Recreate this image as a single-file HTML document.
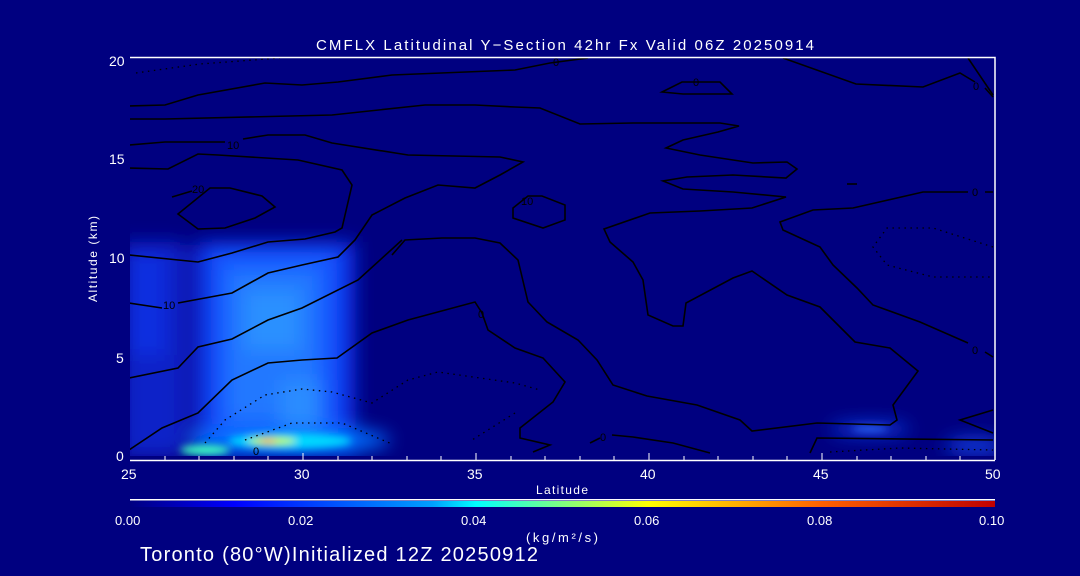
<!DOCTYPE html>
<html><head><meta charset="utf-8"><style>
html,body{margin:0;padding:0;background:#000080;width:1080px;height:576px;overflow:hidden}
svg{display:block}
text{font-family:"Liberation Sans",sans-serif;fill:#fff}
</style></head><body>
<svg width="1080" height="576" viewBox="0 0 1080 576">
<defs>
<filter id="b8" x="-50%" y="-50%" width="200%" height="200%"><feGaussianBlur stdDeviation="9"/></filter>
<filter id="b4" x="-50%" y="-50%" width="200%" height="200%"><feGaussianBlur stdDeviation="4"/></filter>
<linearGradient id="cb" x1="0" x2="1">
<stop offset="0" stop-color="#000080"/><stop offset="0.12" stop-color="#0000ff"/><stop offset="0.35" stop-color="#00a0ff"/><stop offset="0.4" stop-color="#00ffff"/><stop offset="0.6" stop-color="#ffff00"/><stop offset="0.8" stop-color="#ff6000"/><stop offset="1" stop-color="#c00000"/></linearGradient>
<clipPath id="pc"><rect x="130" y="58" width="865" height="398"/></clipPath>
</defs>
<g clip-path="url(#pc)">
<g filter="url(#b8)">
<rect x="122" y="242" width="58" height="215" fill="#0a22c8"/>
<rect x="130" y="255" width="35" height="100" fill="#0e2ee0"/>
<rect x="180" y="245" width="20" height="205" fill="#0818b0"/>
<rect x="200" y="242" width="155" height="215" fill="#0a30e8"/>
<rect x="212" y="250" width="125" height="190" fill="#1658ff"/>
<rect x="228" y="270" width="90" height="150" fill="#2478ff"/>
<rect x="245" y="290" width="55" height="60" fill="#2a90ff"/>
<rect x="280" y="380" width="40" height="55" fill="#2a8cff"/>
<ellipse cx="290" cy="440" rx="100" ry="14" fill="#0070ff"/>
<ellipse cx="870" cy="429" rx="40" ry="5" fill="#1850ff"/>
<ellipse cx="975" cy="446" rx="30" ry="7" fill="#1448f0"/>
</g>
<g filter="url(#b4)">
<ellipse cx="290" cy="441" rx="62" ry="8" fill="#00d8ff"/>
<ellipse cx="205" cy="450" rx="25" ry="5" fill="#40ffc0"/>
<ellipse cx="272" cy="441" rx="24" ry="4" fill="#c0ff40"/>
<ellipse cx="268" cy="441" rx="9" ry="2.5" fill="#ffa000"/>
<ellipse cx="870" cy="429" rx="18" ry="2.5" fill="#3070ff"/>
</g>
<g fill="none" stroke="#000" stroke-width="1.6">
<path d="M129 106 L165 105 L198 95 L265 83 L302 85 L338 82 L392 75 L515 70 L550 63 L588 58"/>
<path d="M129 119 L165 119 L332 115 L425 105 L475 105 L515 107 L540 108 L580 124 L633 123 L720 123 L739 126 L718 132 L683 140 L666 148 L700 155 L753 163 L787 162 L797 169 L786 178 L733 175 L687 177 L663 181 L683 189 L733 192 L786 197 L752 208 L700 211 L650 213 L604 229 L610 242 L633 262 L643 280 L648 315 L673 326 L683 326 L686 303 L733 278 L752 271 L787 295 L820 307 L855 342 L890 348 L918 371 L893 405 L897 420 L890 425 L817 423 L752 431 L740 420 L697 405 L647 396 L613 385 L597 360 L578 340 L547 322 L528 302 L518 260 L500 243 L475 238 L442 238 L405 240 L392 255"/>
<path d="M129 145 L165 142 L225 142 M243 139 L268 135 L305 135 L332 143 L408 155 L500 157 L523 162 L500 175 L475 188 L438 185 L405 198 L372 215 L355 240 L338 257 L302 265 L268 273 L232 293 L178 303 M162 308 L129 303"/>
<path d="M129 168 L168 169 L198 154 L218 155 L298 160 L342 170 L352 185 L342 228 L335 232 L305 239 L268 242 L232 253 L198 262 L129 255"/>
<path d="M172 197 L192 191 M210 188 L230 188 L262 196 L275 207 L255 218 L225 228 L198 229 L178 214 Z"/>
<path d="M129 378 L178 368 L198 347 L232 339 L268 320 L302 308 L358 280 L402 240"/>
<path d="M129 450 L162 428 L198 413 L232 380 L268 363 L302 360 L337 358 L372 333 L408 320 L475 302 L482 313 L488 330 L515 348 L543 358 L565 382 L553 402 L520 428 L520 438 L550 445 L533 452"/>
<path d="M662 92 L682 82 L720 82 L732 94 L683 94 Z"/>
<path d="M513 208 L528 196 L542 196 L565 205 L565 220 L543 228 L513 218 Z"/>
<path d="M783 58 L856 84 L923 87 L960 73 L975 82 M985 88 L993 97"/>
<path d="M968 58 L993 95"/>
<path d="M993 192 L985 192 M968 192 L923 192 L853 208 L813 210 L780 222 L783 230 L820 247 L833 265 L857 288 L873 305 L920 322 L968 343 M985 352 L993 357"/>
<path d="M847 184 L857 184"/>
<path d="M993 410 L960 420 L993 433"/>
<path d="M810 453 L817 438 L993 440"/>
<path d="M590 443 L600 438 M612 435 L633 437 L673 443 L710 453"/>
</g>
<g fill="none" stroke="#000" stroke-width="1.3" stroke-dasharray="1.5 4.5">
<path d="M136 73 L200 64 L280 58"/>
<path d="M205 443 L225 420 L265 395 L302 389 L332 392 L372 403 L408 380 L438 372 L515 383 L533 388 L540 390"/>
<path d="M245 440 L292 423 L342 423 L392 444"/>
<path d="M515 413 L472 440"/>
<path d="M993 247 L933 228 L887 228 L873 247 L887 265 L933 277 L993 277"/>
<path d="M830 452 L900 448 L993 450"/>
</g>
</g>
<g font-size="11" style="fill:#000">
<text x="227" y="149" style="fill:#000">10</text>
<text x="192" y="193" style="fill:#000">20</text>
<text x="163" y="309" style="fill:#000">10</text>
<text x="521" y="205" style="fill:#000">10</text>
<text x="693" y="86" style="fill:#000">0</text>
<text x="553" y="66" style="fill:#000">0</text>
<text x="973" y="90" style="fill:#000">0</text>
<text x="972" y="196" style="fill:#000">0</text>
<text x="972" y="354" style="fill:#000">0</text>
<text x="478" y="318" style="fill:#000">0</text>
<text x="600" y="441" style="fill:#000">0</text>
<text x="253" y="455" style="fill:#000">0</text>
</g>
<g stroke="#fff" stroke-width="1.5" fill="none">
<path d="M130 57.5 H995 V460 M130 460.5 H995"/>
</g>
<g stroke="#fff" stroke-width="1">
<path d="M165 460v-4M199 460v-4M234 460v-4M268 460v-4M303 460v-7M338 460v-4M372 460v-4M407 460v-4M441 460v-4M476 460v-7M511 460v-4M545 460v-4M580 460v-4M614 460v-4M649 460v-7M684 460v-4M718 460v-4M753 460v-4M787 460v-4M822 460v-7M857 460v-4M891 460v-4M926 460v-4M960 460v-4"/>
</g>
<g font-size="14">
<text x="109" y="66">20</text><text x="109" y="164">15</text><text x="109" y="263">10</text><text x="116" y="363">5</text><text x="116" y="461">0</text>
<text x="121" y="479">25</text><text x="294" y="479">30</text><text x="467" y="479">35</text><text x="640" y="479">40</text><text x="813" y="479">45</text><text x="985" y="479">50</text>
<text x="536" y="494" font-size="12" textLength="52">Latitude</text>
<text x="97" y="302" font-size="12" transform="rotate(-90 97 302)" textLength="86">Altitude (km)</text>
<text x="316" y="50" font-size="15" textLength="498">CMFLX Latitudinal Y−Section 42hr  Fx Valid 06Z 20250914</text>
</g>
<rect x="130" y="499" width="865" height="1.5" fill="#fff"/>
<rect x="130" y="501" width="865" height="6" fill="url(#cb)"/>
<g font-size="13">
<text x="115" y="525">0.00</text><text x="288" y="525">0.02</text><text x="461" y="525">0.04</text><text x="634" y="525">0.06</text><text x="807" y="525">0.08</text><text x="979" y="525">0.10</text>
<text x="526" y="542" font-size="13" textLength="72">(kg/m²/s)</text>
<text x="140" y="561" font-size="20" textLength="398">Toronto (80°W)Initialized 12Z 20250912</text>
</g>
</svg>
</body></html>
